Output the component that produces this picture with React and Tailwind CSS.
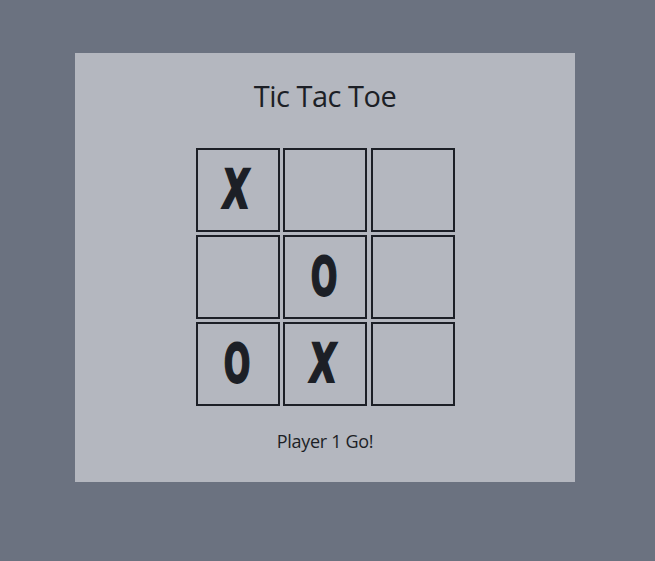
export default function App() {
  const cells = ["X", "", "", "", "O", "", "O", "X", ""];
  return (
    <div className="w-[655px] h-[561px] bg-[#6b7280] pt-[53px] pl-[75px]">
      <div className="w-[500px] h-[429px] bg-[#b4b7bf] flex flex-col items-center text-[#1c1f26]" style={{ fontFamily: '"Open Sans", "Noto Sans", sans-serif' }}>
        <div className="h-[27px]" />
        <div className="text-[29px] leading-[32px] tracking-[-0.5px] font-medium">Tic Tac Toe</div>
        <div className="h-[36px]" />
        <div className="grid grid-cols-[84px_84px_84px] grid-rows-[84px_84px_84px] gap-x-[3.5px] gap-y-[3px]">
          {cells.map((c, i) => (
            <div key={i} className="border-2 border-[#1c1f26] flex items-center justify-center">
              {c === "X" && (
                <span className="text-[54px] font-black leading-none inline-block scale-x-[0.64] -skew-x-[8deg] -translate-x-[2px] [-webkit-text-stroke:2px_#1c1f26]" style={{ fontFamily: '"DejaVu Sans", sans-serif' }}>X</span>
              )}
              {c === "O" && (
                <span className="text-[54px] font-black leading-none scale-x-[0.58] inline-block -translate-x-[1px] [-webkit-text-stroke:2px_#1c1f26]" style={{ fontFamily: '"DejaVu Sans", sans-serif' }}>O</span>
              )}
            </div>
          ))}
        </div>
        <div className="h-[24px]" />
        <div className="text-[18px] leading-[22px] tracking-[-0.3px] font-medium">Player 1 Go!</div>
      </div>
    </div>
  );
}
